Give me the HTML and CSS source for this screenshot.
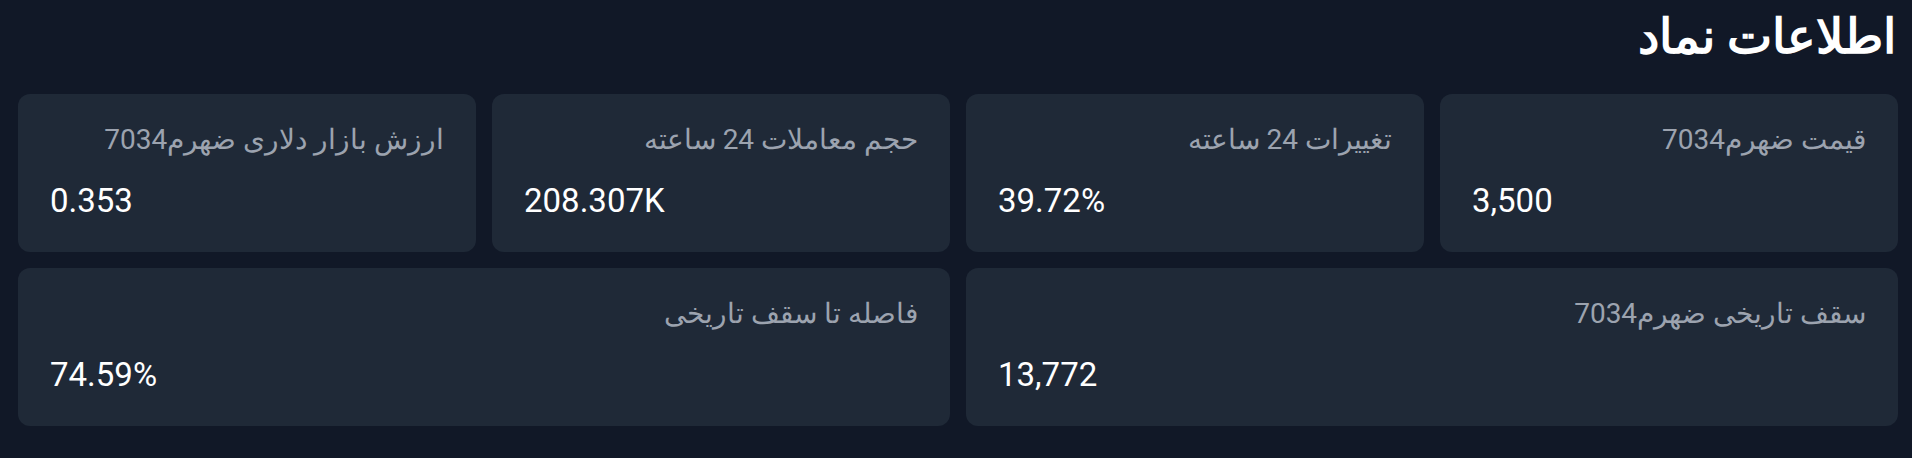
FILE: index.html
```html
<!DOCTYPE html>
<html lang="fa" dir="rtl">
<head>
    <meta charset="UTF-8">
    <meta name="viewport" content="width=device-width, initial-scale=1.0">
    <title>اطلاعات نماد</title>
    <link rel="stylesheet" href="styles.css">
</head>
<body>
<section class="symbol-info">
    <h2 class="title">اطلاعات نماد</h2>
    <div class="stats-grid">
        <div class="stat-card">
            <div class="stat-label">قیمت ضهرم7034</div>
            <div class="stat-value">3,500</div>
        </div>
        <div class="stat-card">
            <div class="stat-label">تغییرات 24 ساعته</div>
            <div class="stat-value">39.72%</div>
        </div>
        <div class="stat-card">
            <div class="stat-label">حجم معاملات 24 ساعته</div>
            <div class="stat-value">208.307K</div>
        </div>
        <div class="stat-card">
            <div class="stat-label">ارزش بازار دلاری ضهرم7034</div>
            <div class="stat-value">0.353</div>
        </div>
        <div class="stat-card wide">
            <div class="stat-label">سقف تاریخی ضهرم7034</div>
            <div class="stat-value">13,772</div>
        </div>
        <div class="stat-card wide">
            <div class="stat-label">فاصله تا سقف تاریخی</div>
            <div class="stat-value">74.59%</div>
        </div>
    </div>
</section>
</body>
</html>
```

FILE: styles.css
```css
:root {
    --bg-dark: #111827;
    --card-bg: #1f2937;
    --label-color: #9ca3af;
    --text-color: #ffffff;
}

body, html {
    margin: 0;
    padding: 0;
    font-family: Roboto, sans-serif;
    background-color: var(--bg-dark);
    color: var(--text-color);
}

.symbol-info {
    padding: 0 14px 31px 18px;
}

.title {
    margin: 0;
    padding: 9px 2px 0 0;
    height: 94px;
    box-sizing: border-box;
    font-size: 48px;
    line-height: 56px;
    font-weight: bold;
}

.stats-grid {
    display: grid;
    grid-template-columns: repeat(4, 1fr);
    gap: 16px;
}

.stat-card {
    background-color: var(--card-bg);
    border-radius: 12px;
    height: 158px;
    box-sizing: border-box;
    padding: 28px 32px 20px;
    display: flex;
    flex-direction: column;
    gap: 23px;
}

.stat-card.wide {
    grid-column: span 2;
}

.stat-label {
    color: var(--label-color);
    font-size: 28px;
    line-height: 36px;
}

.stat-value {
    direction: ltr;
    text-align: left;
    font-size: 33px;
    line-height: 40px;
}
```
